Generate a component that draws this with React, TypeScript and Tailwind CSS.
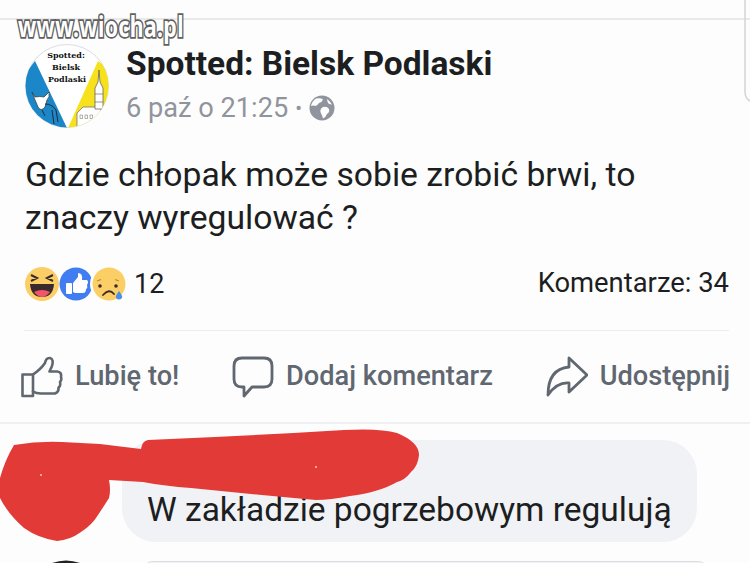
import React from "react";

const roboto = { fontFamily: "Roboto, sans-serif" };

function Avatar() {
  return (
    <svg width="84" height="84" viewBox="0 0 84 84" className="shrink-0">
      <defs>
        <clipPath id="c"><circle cx="42" cy="42" r="41.5" /></clipPath>
      </defs>
      <circle cx="42" cy="42" r="41.5" fill="#fff" stroke="#dcdde0" strokeWidth="1" />
      <g clipPath="url(#c)">
        <path d="M10 17 L42 84 H0 V30 Z" fill="#1b86c8" />
        <path d="M43 84 L73 17 L90 30 V84 Z" fill="#f6e11c" />
        <path d="M7 48 L10 53 Q15 52 19 53 L24 48 Q25 53 22 56 L20 63 Q16 68 13 63 Q11 58 10 56 Z" fill="#fff" stroke="#333" strokeWidth="0.7" />
        <path d="M20 60 Q27 60 31 66 L33 78 M27 66 L29 80 M17 66 L20 72" fill="none" stroke="#222" strokeWidth="0.9" />
        <path d="M52 84 V69 L58 63 H76 V84 Z" fill="#fff" stroke="#666" strokeWidth="0.7" />
        <path d="M70 65 V44 L73 38 L74 26 L75 38 L78 44 V65 Z" fill="#fff" stroke="#555" strokeWidth="0.7" />
        <path d="M70 50 H78 M70 58 H78" stroke="#555" strokeWidth="0.6" />
        <path d="M55 71 h2.500 v3.500 h-2.500 z M60 71 h2.500 v3.500 h-2.500 z M65 71 h2.500 v3.500 h-2.500 z" fill="#fff" stroke="#666" strokeWidth="0.5" />
      </g>
      <g fontFamily="'DejaVu Serif', serif" fontWeight="700" fontSize="8" textAnchor="middle" fill="#111">
        <text x="41" y="14">Spotted:</text>
        <text x="41" y="26">Bielsk</text>
        <text x="42" y="38">Podlaski</text>
      </g>
    </svg>
  );
}

function Globe() {
  return (
    <svg width="26" height="26" viewBox="0 0 26 26" className="ml-[7px]">
      <circle cx="13" cy="13" r="12.5" fill="#8f949e" />
      <path d="M7 3.5 q5 -1 7 1 q-1 3 -4 3.5 q-1 2 -3.500 3 q-2 -1 -4.500 0 q1 -5 5 -7.500 Z M14 12 q4 -1 6 2 q1 3 -2 5 q-1 3 -4 4.500 q-1 -4 -2 -5 q-2 -4 2 -6.500 Z M18 4 q3 2 5 5.500 l-3 -.5 q-2 -2 -2 -5 Z" fill="#fff" />
    </svg>
  );
}

function Reactions() {
  return (
    <svg width="106" height="36" viewBox="0 0 106 36">
      <circle cx="17" cy="18" r="17" fill="#fbcf66" />
      <path d="M5 18 H29 Q28 31 17 31 Q6 31 5 18 Z" fill="#3b2a2c" />
      <path d="M9 26 Q17 22 25 26 Q21 31 17 31 Q13 31 9 26 Z" fill="#f0556c" />
      <path d="M6 9 L12 12 L6 15 M28 9 L22 12 L28 15" fill="none" stroke="#3b2a2c" strokeWidth="2" />
      <circle cx="51" cy="18" r="17" fill="#fdfdfd" />
      <circle cx="51" cy="18" r="16.500" fill="#3f7df0" />
      <rect x="41" y="17" width="6" height="11" rx="1" fill="#fff" />
      <path d="M48 17 L53 11 V7 Q58 7 57 14 H62 Q64 16 62 19 Q63 22 61 23 Q61 27 58 27 H50 L48 26 Z" fill="#fff" />
      <circle cx="83" cy="18" r="18" fill="#fdfdfd" />
      <circle cx="84" cy="18" r="16.500" fill="#fbcf66" />
      <circle cx="75" cy="20" r="1.800" fill="#3b2a2c" />
      <circle cx="91" cy="20" r="1.800" fill="#3b2a2c" />
      <path d="M72 15 L76 13.500 M90 13.500 L94 15" stroke="#b98b3a" strokeWidth="1.300" />
      <path d="M78 29 Q84 22 89 28" fill="none" stroke="#3b2a2c" strokeWidth="1.800" strokeLinecap="round" />
      <path d="M94 25 Q98 30 97 32 Q94 35 91 32 Q90 30 94 25 Z" fill="#4c8ee8" />
    </svg>
  );
}

function LikeIcon() {
  return (
    <svg width="42" height="42" viewBox="0 0 42 42" fill="none" stroke="#606770" strokeWidth="2.600" strokeLinejoin="round" strokeLinecap="round">
      <path d="M1.500 18.500 H12 V40 H1.500 Z" />
      <path d="M12 18.500 Q20 13 24 7 Q25 1.500 29 2 Q33 3 31 10 L28.500 15.500 H36 Q41 16 40 21 Q41 24 39 26 Q40 30 37.500 31.500 Q38 36 34 37.500 H20 Q15 37.500 12 35.500" />
    </svg>
  );
}

function CommentIcon() {
  return (
    <svg width="42" height="42" viewBox="0 0 42 42" fill="none" stroke="#606770" strokeWidth="2.800" strokeLinejoin="round">
      <path d="M10 2 H32 Q40 2 40 10 V23 Q40 31 32 31 H20 L12 40 V31 H10 Q2 31 2 23 V10 Q2 2 10 2 Z" />
    </svg>
  );
}

function ShareIcon() {
  return (
    <svg width="42" height="42" viewBox="0 0 42 42" fill="none" stroke="#606770" strokeWidth="2.800" strokeLinejoin="round" strokeLinecap="round">
      <path d="M23 2 L41 19 L23 36 V27 Q11 26 2 39 Q2 13 23 11 Z" />
    </svg>
  );
}

function Action({ icon, label }: { icon: React.ReactNode; label: string }) {
  return (
    <div className="flex items-center gap-[12px]">
      {icon}
      <span className="text-[27.200px] font-medium text-[#606770] leading-none">{label}</span>
    </div>
  );
}

export default function App() {
  return (
    <div className="relative w-[750px] h-[563px] overflow-hidden bg-[#fdfdfd]" style={roboto}>
      <div className="h-5 border-b-2 border-[#e9e9e9]" />

      <header className="flex pl-[25px] pt-[24px] gap-[17px]">
        <Avatar />
        <div className="flex flex-col">
          <h1 className="text-[33.500px] font-bold leading-[40px] text-[#1c1e21]">Spotted: Bielsk Podlaski</h1>
          <div className="flex items-center mt-[6px] text-[27.200px] leading-[36px] text-[#90949c]">
            <span>6 paź o 21:25</span>
            <span className="ml-[7px] text-[20px]">•</span>
            <Globe />
          </div>
        </div>
      </header>

      <p className="mt-[25px] pl-[25px] text-[33.700px] leading-[43px] text-[#1c1e21]">
        Gdzie chłopak może sobie zrobić brwi, to
        <br />
        znaczy wyregulować ?
      </p>

      <div className="flex items-center justify-between pl-[25px] pr-[21px] mt-[27px] h-[36px]">
        <div className="flex items-center gap-[3px]">
          <Reactions />
          <span className="text-[27px] text-[#1c1e21]">12</span>
        </div>
        <span className="text-[27.400px] text-[#1c1e21]">Komentarze: 34</span>
      </div>

      <div className="ml-[24px] mr-[21px] mt-[28px] border-t border-[#eceded]" />

      <div className="flex items-center justify-between pl-[21px] pr-[20px] mt-[25px] h-[42px]">
        <Action icon={<LikeIcon />} label="Lubię to!" />
        <Action icon={<CommentIcon />} label="Dodaj komentarz" />
        <Action icon={<ShareIcon />} label="Udostępnij" />
      </div>

      <div className="mt-[24px] border-t-2 border-[#eff0f1]" />

      <div className="ml-[122px] mr-[53px] mt-[16px] h-[102px] rounded-[34px] bg-[#f1f2f5] flex items-end pl-[25px] pb-[11px]">
        <span className="text-[33.500px] leading-[43px] text-[#1c1e21] whitespace-nowrap">W zakładzie pogrzebowym regulują</span>
      </div>

      <div className="ml-[143px] mr-[42px] mt-[19px] h-[10px] rounded-t-[20px] bg-[#f1f2f5] border-t border-[#dcdde0]" />

      {/* overlays: photo edit marks */}
      <svg width="750" height="563" viewBox="0 0 750 563" className="absolute inset-0 pointer-events-none">
        <path
          d="M14 445 Q38 441 62 442 L100 444 L141 449 Q142 441 148 440 L215 437 Q280 434 344 430 Q380 428 397 433 Q419 442 419 455 Q418 466 411 472 Q405 480 397 482 Q380 492 350 496 Q330 500 316 500 Q250 494 191 488 Q165 486 143 482 L109 480 Q111 490 109 498 Q104 506 98 515 Q92 525 81 532 Q70 540 57 541 Q38 538 24 528 Q8 514 0 498 L0 478 Q5 460 14 445 Z"
          fill="#e23a36"
        />
        <circle cx="41" cy="475" r="1" fill="#f5c9c6" />
        <circle cx="316" cy="467" r="1" fill="#f5c9c6" />
        <path d="M745 0 V92 Q745 98 750 101" fill="none" stroke="#d4d4d4" strokeWidth="1.500" />
        <path d="M52 563 Q66 558 80 563 Z" fill="#222" />
      </svg>

      <div
        className="absolute left-[18px] top-[8px] origin-left scale-x-[0.76] text-[28px] font-bold leading-[36px] tracking-[0.5px] text-white [-webkit-text-stroke:3.500px_#606060] [paint-order:stroke_fill]"
        style={{ fontFamily: "'Noto Sans', sans-serif" }}
      >
        www.wiocha.pl
      </div>
    </div>
  );
}
